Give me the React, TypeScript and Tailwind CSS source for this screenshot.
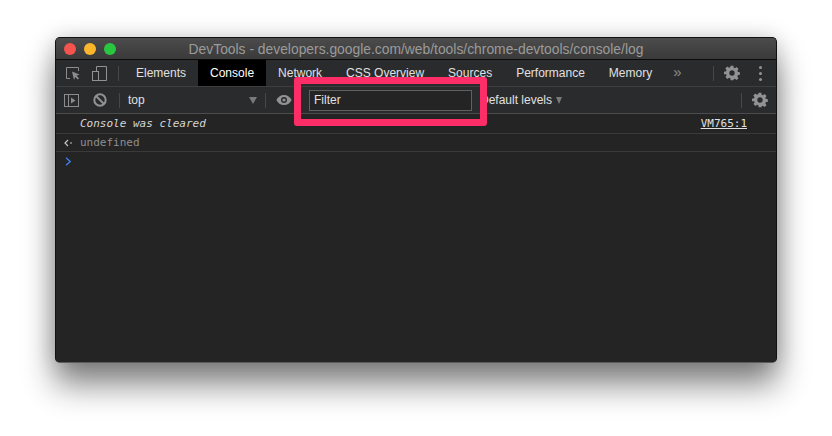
const tabs = ["Elements", "Console", "Network", "CSS Overview", "Sources", "Performance", "Memory"];

function Gear({ x }: { x: string }) {
  return (
    <svg width="16" height="16" viewBox="0 0 24 24" className={x} fill="#929292">
      <path
        fillRule="evenodd"
        d="M10 1h4l.6 3.1 1.7.7 2.6-1.8 2.9 2.9-1.8 2.6.7 1.7 3.1.6v4l-3.1.6-.7 1.7 1.8 2.6-2.9 2.9-2.6-1.8-1.7.7L14 23h-4l-.6-3.1-1.7-.7-2.6 1.8-2.9-2.9 1.8-2.6-.7-1.7L0 14v-4l3.1-.6.7-1.7L2 5.1 4.9 2.2l2.6 1.8 1.7-.7L10 1zm2 7a4 4 0 100 8 4 4 0 000-8z"
      />
    </svg>
  );
}

export default function App() {
  return (
    <div className="relative w-[832px] h-[436px] bg-white overflow-hidden font-['Liberation_Sans',Arial,sans-serif] pt-[37px] pl-[55px] whitespace-nowrap">
      <div className="w-[722px] h-[326px] rounded-[5px] flex flex-col overflow-hidden bg-[#242424] border border-[#111] border-b-[#5c5c5c] shadow-[0_22px_32px_rgba(0,0,0,0.48),0_0_22px_rgba(0,0,0,0.18)]">
        {/* title bar */}
        <div className="relative h-[22px] shrink-0 flex items-center justify-center bg-gradient-to-b from-[#4c4c4c] to-[#3a3a3a] border-b border-[#0c0c0c]">
          <div className="absolute left-[8px] top-[5px] flex gap-[8px]">
            <span className="w-3 h-3 rounded-full bg-[#f4544d]" />
            <span className="w-3 h-3 rounded-full bg-[#fbb62c]" />
            <span className="w-3 h-3 rounded-full bg-[#29c73f]" />
          </div>
          <span className="text-[13.85px] text-[#9b9b9b] pt-px">DevTools - developers.google.com/web/tools/chrome-devtools/console/log</span>
        </div>

        {/* tabs */}
        <div className="h-[27px] shrink-0 flex items-center bg-[#2a2b2d] border-b border-[#3e3e3e] text-[12px] text-[#e0e0e0]">
          <svg width="16" height="16" viewBox="0 0 16 16" className="ml-[9px]" fill="none">
            <path d="M5 13.500H1.500v-11h12V6" stroke="#8c8c8c" strokeWidth="1" />
            <path d="M7 6.500l7.500 3-3 1.200 2.600 2.600-1.300 1.300-2.600-2.600-1.200 3z" fill="#8c8c8c" />
          </svg>
          <svg width="17" height="17" viewBox="0 0 17 17" className="ml-[10px]" fill="none" stroke="#929292">
            <path d="M5.500 6V1.500h10v14H7.500" />
            <rect x="1.500" y="6.500" width="6" height="9" />
          </svg>
          <span className="w-px h-[15px] bg-[#474747] ml-[10px] mr-[5px]" />
          {tabs.map((t) => (
            <div
              key={t}
              className={`h-full flex items-center px-3 ${t === "Console" ? "bg-black text-white" : ""}`}
            >
              {t}
            </div>
          ))}
          <span className="ml-[9px] text-[15px] text-[#8c8c8c] leading-none pb-[3px]">»</span>
          <span className="w-px h-[15px] bg-[#474747] ml-[31px]" />
          <Gear x="ml-[10px]" />
          <div className="ml-[19px] flex flex-col gap-[3px]">
            <span className="w-[3px] h-[3px] rounded-full bg-[#929292]" />
            <span className="w-[3px] h-[3px] rounded-full bg-[#929292]" />
            <span className="w-[3px] h-[3px] rounded-full bg-[#929292]" />
          </div>
        </div>

        {/* toolbar */}
        <div className="h-[27px] shrink-0 flex items-center bg-[#2a2b2d] border-b border-[#4c4c4c] text-[12px] text-[#e0e0e0]">
          <svg width="15" height="13" viewBox="0 0 15 13" className="ml-[8px] shrink-0" fill="none">
            <rect x="0.500" y="0.500" width="14" height="12" stroke="#8c8c8c" />
            <path d="M4.500 0v13" stroke="#8c8c8c" />
            <path d="M7 3.500l4.500 3-4.500 3z" fill="#8c8c8c" />
          </svg>
          <svg width="14" height="14" viewBox="0 0 14 14" className="ml-[14px] shrink-0" fill="none" stroke="#929292" strokeWidth="2">
            <circle cx="7" cy="7" r="5.700" />
            <path d="M3 3l8 8" />
          </svg>
          <span className="w-px h-[15px] bg-[#474747] ml-[12px]" />
          <span className="ml-[8px] w-[121px]">top</span>
          <span className="w-0 h-0 border-l-4 border-r-4 border-t-[7px] border-l-transparent border-r-transparent border-t-[#7a7a7a]" />
          <span className="w-px h-[15px] bg-[#474747] ml-[8px]" />
          <svg width="16" height="12" viewBox="0 0 16 12" className="ml-[10px] shrink-0">
            <path fillRule="evenodd" d="M8 1c3.400 0 6.300 2 7.600 5-1.300 3-4.200 5-7.600 5S1.700 9 .4 6C1.700 3 4.600 1 8 1zm0 2a3 3 0 100 6 3 3 0 000-6z" fill="#929292" />
            <circle cx="8" cy="6" r="1.600" fill="#929292" />
          </svg>
          <div className="ml-[17px] w-[163px] shrink-0 h-[21px] flex items-center pl-[4px] border border-[#606060] bg-[#242424]">Filter</div>
          <span className="ml-[8px]">Default levels</span>
          <span className="ml-[4px] w-0 h-0 border-l-[3.500px] border-r-[3.500px] border-t-[7px] border-l-transparent border-r-transparent border-t-[#7a7a7a]" />
          <span className="flex-1" />
          <span className="w-px h-[15px] bg-[#474747]" />
          <Gear x="ml-[10px] mr-[8px] shrink-0" />
        </div>

        {/* console */}
        <div className="flex-1 bg-[#242424] font-['DejaVu_Sans_Mono','Liberation_Mono',monospace] text-[11px]">
          <div className="h-[20px] flex items-center justify-between pl-[24px] pr-[29px] border-b border-[#3a3a3a]">
            <span className="italic text-[#d6d6d6] pt-[2px]">Console was cleared</span>
            <span className="underline text-[#e0e0e0] pt-[2px]">VM765:1</span>
          </div>
          <div className="h-[18px] flex items-center border-b border-[#3a3a3a]">
            <svg width="8" height="8" viewBox="0 0 8 8" className="ml-[8px]" fill="none" stroke="#c4c4c4" strokeWidth="1.200">
              <path d="M4 1L1 4l3 3" />
              <path d="M6 4h2" />
            </svg>
            <span className="ml-[8px] text-[#8f8f8f] pt-px">undefined</span>
          </div>
          <div className="h-[18px] flex items-center">
            <svg width="7" height="9" viewBox="0 0 7 9" className="ml-[9px]" fill="none" stroke="#3f7fe8" strokeWidth="1.400">
              <path d="M1 .8L5.200 4.500 1 8.200" />
            </svg>
          </div>
        </div>
      </div>

      {/* annotation */}
      <div className="absolute left-[294px] top-[77px] w-[193px] h-[49px] rounded-[3px] border-[7px] border-[#fd2d68]" />
    </div>
  );
}
